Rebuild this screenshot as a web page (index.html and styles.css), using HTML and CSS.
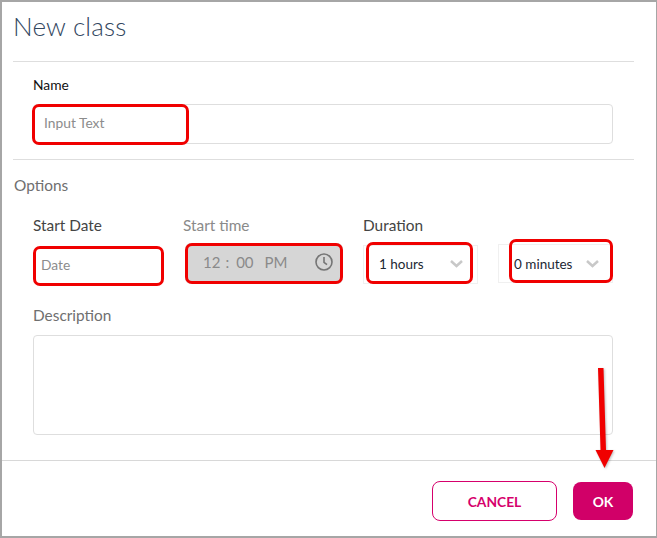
FILE: index.html
```html
<html>
  <head>
    <title>New class</title>
    <link rel="stylesheet" href="styles.css">
  </head>

  <body>
    <div class="dialog">
      <h1 class="title">New class</h1>

      <div class="section name-section">
        <label class="label label-dark">Name</label>
        <div class="field field-name">
          <span class="placeholder">Input Text</span>
          <span class="mark mark-name"></span>
        </div>
      </div>

      <h2 class="options">Options</h2>

      <div class="row">
        <div class="col col-date">
          <label class="label">Start Date</label>
          <div class="field-date">
            <span class="placeholder">Date</span>
            <span class="mark mark-date"></span>
          </div>
        </div>
        <div class="col col-time">
          <label class="label label-muted">Start time</label>
          <div class="field-time">
            <span class="time-text">12</span>
            <span class="time-sep">:</span>
            <span class="time-text">00</span>
            <span class="time-text time-pm">PM</span>
            <svg class="clock" width="20" height="20" viewBox="0 0 20 20">
              <circle cx="10" cy="10" r="8" fill="none" stroke="#757575" stroke-width="1.6"/>
              <path d="M10 5v5.4l3 2.2" fill="none" stroke="#757575" stroke-width="1.6"/>
            </svg>
            <span class="mark mark-time"></span>
          </div>
        </div>
        <div class="col col-hours">
          <label class="label">Duration</label>
          <div class="select select-hours">
            <span>1 hours</span>
            <svg class="chevron" width="13" height="8" viewBox="0 0 13 8">
              <path d="M1 1l5.500 5L12 1" fill="none" stroke="#c8c8c8" stroke-width="2.500"/>
            </svg>
            <span class="mark mark-hours"></span>
          </div>
        </div>
        <div class="col col-minutes">
          <div class="select select-minutes">
            <span>0 minutes</span>
            <svg class="chevron" width="13" height="8" viewBox="0 0 13 8">
              <path d="M1 1l5.500 5L12 1" fill="none" stroke="#c8c8c8" stroke-width="2.500"/>
            </svg>
            <span class="mark mark-minutes"></span>
          </div>
        </div>
      </div>

      <div class="description">
        <label class="label label-gray">Description</label>
        <div class="textarea"></div>
      </div>

      <div class="footer">
        <button class="btn btn-cancel">CANCEL</button>
        <button class="btn btn-ok">OK</button>
      </div>

      <svg class="arrow" width="26" height="106" viewBox="0 0 26 106">
        <path d="M7 0h5.500l2.500 82h7.500l-9 18-9-18h5z" fill="#f00000"/>
      </svg>
    </div>
  </body>
</html>
```

FILE: styles.css
```css
html, body {
  margin: 0;
  padding: 0;
}

body {
  background: #fff;
  font-family: Lato, "Open Sans", sans-serif;
}

.dialog {
  position: relative;
  box-sizing: border-box;
  width: 657px;
  height: 538px;
  border: 2px solid #a6a6a6;
  border-right-width: 1px;
  background: #fff;
}

.title {
  margin: 0 0 0 11px;
  padding-top: 8px;
  height: 59px;
  box-sizing: border-box;
  font-size: 26px;
  line-height: 32px;
  font-weight: 300;
  color: #33475f;
  letter-spacing: 0.2px;
}

.section {
  margin: 0 22px 0 11px;
  padding: 14px 21px 15px 20px;
  border-top: 1px solid #dedede;
  border-bottom: 1px solid #dedede;
}

.label {
  display: block;
  font-size: 15.400px;
  line-height: 18px;
  color: #444;
}

.label-dark {
  font-size: 13.800px;
  color: #111;
}

.label-muted {
  color: #8a8a8a;
}

.label-gray {
  color: #6f6f6f;
}

.field {
  position: relative;
  margin-top: 10px;
  height: 40px;
  box-sizing: border-box;
  border: 1px solid #dedede;
  border-radius: 4px;
  display: flex;
  align-items: center;
  padding: 0 0 3px 10px;
}

.placeholder {
  font-size: 13.800px;
  color: #8c8c8c;
}

.mark {
  position: absolute;
  box-sizing: border-box;
  border: 3px solid #f00000;
  border-radius: 7px;
}

.mark-name {
  left: -2px;
  top: -1px;
  width: 157px;
  height: 41px;
}

.options {
  margin: 16px 0 0 12px;
  font-size: 15.400px;
  line-height: 18px;
  font-weight: 400;
  color: #6f6f6f;
}

.row {
  display: flex;
  margin: 22px 0 0 31px;
}

.col-date {
  width: 150px;
}

.col-time {
  width: 180px;
}

.col-hours {
  width: 135px;
}

.col-minutes {
  width: 115px;
  padding-top: 28px;
}

.field-date {
  position: relative;
  margin-top: 12px;
  width: 130px;
  height: 40px;
  display: flex;
  align-items: center;
  padding: 0 0 3px 8px;
  box-sizing: border-box;
}

.mark-date {
  left: 0;
  top: 0;
  width: 131px;
  height: 40px;
}

.field-time {
  position: relative;
  margin: 9px 0 0 2px;
  width: 158px;
  height: 41px;
  box-sizing: border-box;
  background: #d6d6d6;
  border-radius: 6px;
  display: flex;
  align-items: center;
  padding: 0 0 3px 18px;
  font-size: 15px;
  color: #8a8a8a;
}

.time-sep {
  margin: 0 7px 0 5px;
}

.time-pm {
  margin-left: 11px;
}

.clock {
  margin-left: auto;
  margin-right: 9px;
}

.mark-time {
  left: 0;
  top: 0;
  width: 158px;
  height: 41px;
}

.select {
  position: relative;
  height: 39px;
  box-sizing: border-box;
  border: 1px solid #f0f0f0;
  display: flex;
  align-items: center;
  justify-content: space-between;
  font-size: 13.500px;
  color: #1c2733;
}

.select-hours {
  margin-top: 11px;
  width: 115px;
  padding: 0 14px 1px 15px;
}

.select-minutes {
  width: 115px;
  padding: 0 13px 0 15px;
}

.mark-hours {
  left: 2px;
  top: -4px;
  width: 107px;
  height: 42px;
}

.mark-minutes {
  left: 10px;
  top: -6px;
  width: 104px;
  height: 44px;
}

.description {
  margin: 20px 0 0 31px;
}

.textarea {
  margin-top: 11px;
  width: 580px;
  height: 100px;
  box-sizing: border-box;
  border: 1px solid #dedede;
  border-radius: 4px;
}

.footer {
  margin-top: 25px;
  border-top: 1px solid #d8d8d8;
  display: flex;
  justify-content: flex-end;
  align-items: center;
  gap: 16px;
  padding: 20px 23px 0 0;
}

.btn {
  height: 40px;
  border-radius: 8px;
  font-family: Lato, "Open Sans", sans-serif;
  font-size: 13.800px;
  font-weight: 700;
  padding: 0;
}

.btn-cancel {
  width: 125px;
  background: #fff;
  border: 1px solid #d6006c;
  color: #d6006c;
}

.btn-ok {
  width: 60px;
  height: 38px;
  background: #d10068;
  border: none;
  color: #fff;
}

.arrow {
  position: absolute;
  left: 589px;
  top: 366px;
  filter: drop-shadow(1px 1px 1px rgba(0, 0, 0, 0.25));
}
```
